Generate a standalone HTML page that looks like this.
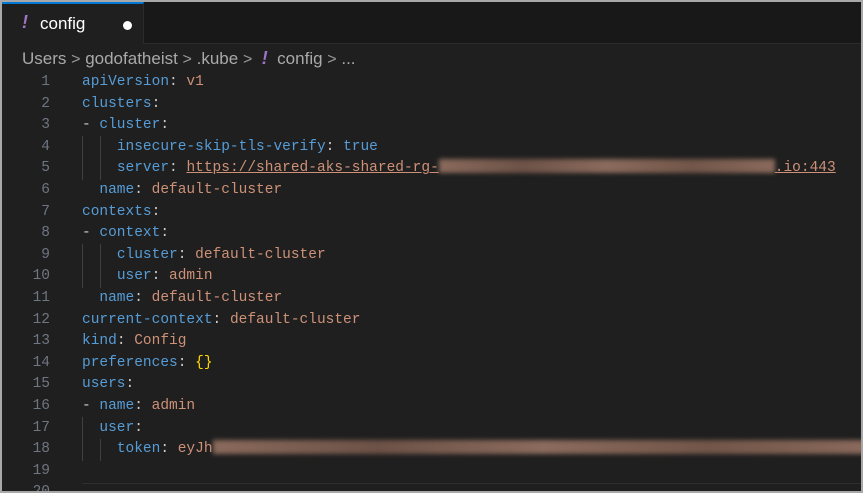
<!DOCTYPE html>
<html><head><style>
body{margin:0;width:863px;height:493px;overflow:hidden;background:#a8a8a8;font-family:"Liberation Sans",sans-serif}
.win{position:absolute;left:2px;top:2px;width:859px;height:489px;background:#1f1f1f;overflow:hidden}
.tabbar{position:absolute;left:0;top:0;width:859px;height:41px;background:#181818;border-bottom:1px solid #2b2b2b}
.tab{position:absolute;left:0;top:0;width:142px;height:42px;background:#1f1f1f;border-top:2px solid #0078d4;border-right:1px solid #2b2b2b;box-sizing:border-box}
.tab .ex{position:absolute;left:20px;top:8px;color:#a074c4;font-size:18px;font-style:italic;font-weight:bold}
.tab .t{position:absolute;left:38px;top:10px;color:#fff;font-size:17px}
.tab .dot{position:absolute;left:121px;top:17px;width:9px;height:9px;border-radius:50%;background:#fff}
.bc{position:absolute;left:20px;top:46px;color:#a9a9a9;font-size:17px;white-space:pre}
.bc .s{font-size:16px;color:#999}
.bc .ex{color:#a074c4;font-style:italic;font-weight:bold;font-size:18px}
.code{position:absolute;left:0;top:70px;font-family:"Liberation Mono",monospace;font-size:14.5px}
.ln{position:absolute;left:0;width:48px;text-align:right;color:#6e7681;height:21.6px;line-height:21.6px}
.l{position:absolute;left:80px;height:21.6px;line-height:21.6px;white-space:pre;color:#ccc}
.k{color:#569cd6}.v{color:#ce9178}.p{color:#ccc}.b{color:#ffd700}
.u{color:#ce9178;text-decoration:underline}
.blur{display:inline-block;height:14px;background:linear-gradient(90deg,#8a6a5c,#6d5247,#8b6b5d,#725649,#8a6a5c);filter:blur(2.5px);vertical-align:middle;margin-top:-3px}
.g{position:absolute;width:1px;background:#404040}
</style></head><body><div class="win">
<div class="tabbar"><div class="tab"><span class="ex">!</span><span class="t">config</span><span class="dot"></span></div></div>
<div class="bc">Users <span class="s">&gt;</span> godofatheist <span class="s">&gt;</span> .kube <span class="s">&gt;</span>  <span class="ex">!</span>  config <span class="s">&gt;</span> ...</div>
<div class="g" style="left:80px;top:134px;height:44px"></div>
<div class="g" style="left:98px;top:134px;height:44px"></div>
<div class="g" style="left:80px;top:242px;height:44px"></div>
<div class="g" style="left:98px;top:242px;height:44px"></div>
<div class="g" style="left:80px;top:415px;height:44px"></div>
<div class="g" style="left:98px;top:437px;height:22px"></div>
<div style="position:absolute;left:80px;top:481px;width:780px;height:1px;background:#2e2e2e"></div>
<div class="code" id="c"></div>
</div>
<script>
var L=[
'<span class="k">apiVersion</span>: <span class="v">v1</span>',
'<span class="k">clusters</span>:',
'- <span class="k">cluster</span>:',
'    <span class="k">insecure-skip-tls-verify</span>: <span class="k">true</span>',
'    <span class="k">server</span>: <span class="u">https://shared-aks-shared-rg-<span class="blur" style="width:336px"></span>.io:443</span>',
'  <span class="k">name</span>: <span class="v">default-cluster</span>',
'<span class="k">contexts</span>:',
'- <span class="k">context</span>:',
'    <span class="k">cluster</span>: <span class="v">default-cluster</span>',
'    <span class="k">user</span>: <span class="v">admin</span>',
'  <span class="k">name</span>: <span class="v">default-cluster</span>',
'<span class="k">current-context</span>: <span class="v">default-cluster</span>',
'<span class="k">kind</span>: <span class="v">Config</span>',
'<span class="k">preferences</span>: <span class="b">{}</span>',
'<span class="k">users</span>:',
'- <span class="k">name</span>: <span class="v">admin</span>',
'  <span class="k">user</span>:',
'    <span class="k">token</span>: <span class="v">eyJh</span><span class="blur" style="width:660px"></span>',
'',''];
var h='';for(var i=0;i<20;i++){var y=i*21.6;h+='<div class="ln" style="top:'+y+'px">'+(i+1)+'</div><div class="l" style="top:'+y+'px">'+L[i]+'</div>';}
document.getElementById('c').innerHTML=h;
</script>
</body></html>
